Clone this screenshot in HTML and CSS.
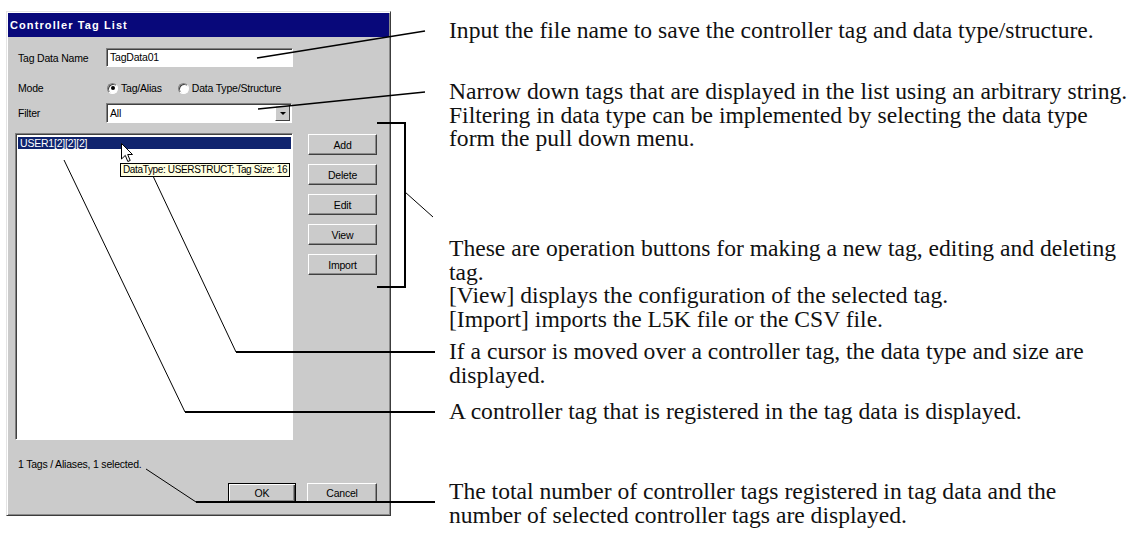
FILE: index.html
```html
<!DOCTYPE HTML>
<html>
<head>
<meta charset="utf-8">
<title>Controller Tag List</title>
<link rel="stylesheet" href="styles.css">
</head>
<body>
<div class="page">
	<div class="dialog">
		<div class="titlebar">Controller Tag List</div>
		<div class="dlg-body">
			<div class="row row-name">
				<span class="lbl">Tag Data Name</span>
				<div class="field name-field">TagData01</div>
			</div>
			<div class="row row-mode">
				<span class="lbl">Mode</span>
				<span class="radio on"></span><span class="rtext">Tag/Alias</span>
				<span class="radio second"></span><span class="rtext">Data Type/Structure</span>
			</div>
			<div class="row row-filter">
				<span class="lbl">Filter</span>
				<div class="field combo"><span class="combo-text">All</span><span class="drop"></span></div>
			</div>
			<div class="main">
				<div class="list">
					<div class="item sel">USER1[2][2][2]</div>
					<div class="tip">DataType: USERSTRUCT; Tag Size: 16</div>
					<svg class="cursor" width="13" height="20" viewBox="0 0 13 20">
						<path d="M0.5 0.5 L0.5 16 L4.3 12.4 L6.8 18.5 L9.2 17.5 L6.7 11.5 L11.5 11.5 Z" fill="#fff" stroke="#000" stroke-width="1"/>
					</svg>
				</div>
				<div class="side-btns">
					<div class="btn">Add</div>
					<div class="btn">Delete</div>
					<div class="btn">Edit</div>
					<div class="btn">View</div>
					<div class="btn">Import</div>
				</div>
			</div>
			<div class="status">1 Tags / Aliases, 1 selected.</div>
			<div class="footer">
				<div class="btn default">OK</div>
				<div class="btn cancel">Cancel</div>
			</div>
		</div>
	</div>

	<div class="notes">
		<p class="note n1">Input the file name to save the controller tag and data type/structure.</p>
		<p class="note n2">Narrow down tags that are displayed in the list using an arbitrary string.<br>Filtering in data type can be implemented by selecting the data type<br>form the pull down menu.</p>
		<p class="note n3">These are operation buttons for making a new tag, editing and deleting<br>tag.<br>[View] displays the configuration of the selected tag.<br>[Import] imports the L5K file or the CSV file.</p>
		<p class="note n4">If a cursor is moved over a controller tag, the data type and size are<br>displayed.</p>
		<p class="note n5">A controller tag that is registered in the tag data is displayed.</p>
		<p class="note n6">The total number of controller tags registered in tag data and the<br>number of selected controller tags are displayed.</p>
	</div>

	<!-- leader lines from the dialog to the notes -->
	<svg class="leaders" width="1134" height="534" viewBox="0 0 1134 534">
		<g fill="none" stroke="#000" stroke-linejoin="miter">
			<line x1="257" y1="58" x2="425" y2="31" stroke-width="1.4"/>
			<line x1="258" y1="109" x2="425" y2="92" stroke-width="1.4"/>
			<polyline points="377,123 405,123 405,287 377,287" stroke-width="2"/>
			<line x1="405" y1="192" x2="433" y2="217" stroke-width="1"/>
			<polyline points="153,176 236,352" stroke-width="1"/>
			<line x1="236" y1="352" x2="435" y2="352" stroke-width="2"/>
			<polyline points="64,160 185,412" stroke-width="1"/>
			<line x1="185" y1="412" x2="435" y2="412" stroke-width="2"/>
			<polyline points="146,469 196,502" stroke-width="1"/>
			<line x1="196" y1="502" x2="435" y2="502" stroke-width="2"/>
		</g>
	</svg>
</div>
</body>
</html>
```

FILE: styles.css
```css
body{
	margin:0;
	background:#fff;}

.page{
	position:relative;
	width:1134px;
	height:534px;
	display:flex;
	align-items:flex-start;}

/* dialog */
.dialog{
	flex:none;
	margin:11px 0 0 6px;
	width:385px;
	height:505px;
	box-sizing:border-box;
	background:#cbcbcb;
	border:1px solid;
	border-color:#e4e4e4 #3c3c3c #3c3c3c #e4e4e4;
	box-shadow:inset 1px 1px #fff, inset -1px -1px #8a8a8a;
	padding:1px;
	font-family:"Liberation Sans", Arial, sans-serif;
	font-size:10.5px;
	letter-spacing:-0.2px;
	color:#000;}

.titlebar{
	height:24px;
	line-height:24px;
	background:#08087a;
	color:#fff;
	font-weight:bold;
	font-size:11px;
	letter-spacing:1.1px;
	padding-left:2px;}

.dlg-body{
	padding:11px 7px 0 7px;}

.row{
	display:flex;
	align-items:center;}

.lbl{
	width:88px;
	padding-left:3px;
	flex:none;}

.field{
	background:#fff;
	box-sizing:border-box;
	border:1px solid;
	border-color:#808080 #fff #fff #808080;
	box-shadow:inset 1px 1px #404040;
	padding:0 3px;}

.row-name{
	height:19px;}
.name-field{
	width:187px;
	height:19px;
	line-height:17px;}

.row-mode{
	height:16px;
	margin-top:13px;}
.radio{
	width:11px;
	height:11px;
	border-radius:50%;
	box-sizing:border-box;
	background:#fff;
	border:1px solid;
	border-color:#808080 #fff #fff #808080;
	box-shadow:inset 1px 1px #404040;
	display:flex;
	align-items:center;
	justify-content:center;
	margin-left:1px;
	flex:none;}
.radio.on::after{
	content:"";
	width:4px;
	height:4px;
	border-radius:50%;
	background:#000;}
.radio.second{
	margin-left:16px;}
.rtext{
	margin-left:3px;}

.row-filter{
	margin-top:7px;}
.combo{
	width:186px;
	height:20px;
	display:flex;
	align-items:center;
	justify-content:space-between;
	padding:0 1px 0 3px;}
.drop{
	width:15px;
	height:16px;
	background:#cbcbcb;
	border:1px solid;
	box-sizing:border-box;
	border-color:#fff #404040 #404040 #fff;
	display:flex;
	align-items:center;
	justify-content:center;}
.drop::after{
	content:"";
	border-left:3px solid transparent;
	border-right:3px solid transparent;
	border-top:3px solid #000;}

/* list and side buttons */
.main{
	display:flex;
	margin-top:10px;}

.list{
	position:relative;
	width:278px;
	height:307px;
	box-sizing:border-box;
	background:#fff;
	border:1px solid;
	border-color:#808080 #fff #fff #808080;
	box-shadow:inset 1px 1px #404040;
	padding:3px 1px 0 2px;}

.item{
	height:12px;
	line-height:12px;
	padding-left:2px;}
.item.sel{
	background:#10246e;
	color:#fff;}

.tip{
	position:absolute;
	left:104px;
	top:29px;
	width:170px;
	height:14px;
	box-sizing:border-box;
	background:#ffffe1;
	border:1px solid #000;
	font-size:10px;
	letter-spacing:-0.35px;
	line-height:12px;
	padding-left:2px;
	white-space:nowrap;}

.cursor{
	position:absolute;
	left:105px;
	top:9px;}

.side-btns{
	margin:1px 0 0 15px;
	display:flex;
	flex-direction:column;
	gap:9px;}

.btn{
	width:69px;
	height:21px;
	box-sizing:border-box;
	background:#cbcbcb;
	border:1px solid;
	border-color:#fff #404040 #404040 #fff;
	box-shadow:inset -1px -1px #8a8a8a;
	display:flex;
	align-items:center;
	justify-content:center;}

.status{
	margin-top:17px;
	padding-left:3px;
	height:14px;
	line-height:14px;}

.footer{
	margin-top:12px;
	padding-right:5px;
	display:flex;
	justify-content:flex-end;
	gap:11px;}
.footer .btn{
	height:20px;}
.btn.default{
	width:68px;
	border:1px solid #000;
	box-shadow:inset 1px 1px #fff, inset -1px -1px #404040, inset -2px -2px #8a8a8a;}
.btn.cancel{
	width:70px;}

/* annotations */
.notes{
	margin-left:58px;
	padding-top:19px;
	font-family:"Liberation Serif", "Times New Roman", serif;
	font-size:23.6px;
	line-height:23.5px;
	color:#111;
	white-space:nowrap;}

.note{
	margin:0;}
.n2{margin-top:37.5px;}
.n3{margin-top:86.5px;}
.n4{margin-top:9px;}
.n5{margin-top:13px;}
.n6{margin-top:56.5px;}

.leaders{
	position:absolute;
	left:0;
	top:0;
	pointer-events:none;}
```
